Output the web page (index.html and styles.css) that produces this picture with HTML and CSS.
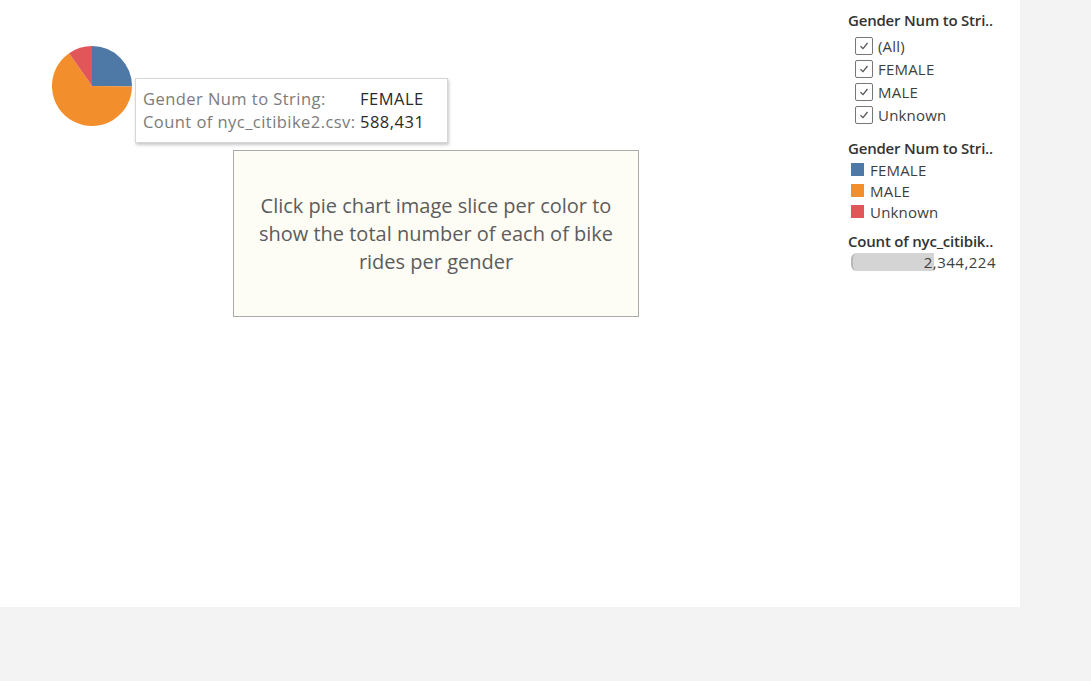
FILE: index.html
```html
<!DOCTYPE html>
<html>
<head>
<meta charset="utf-8">
<link rel="stylesheet" href="styles.css">
</head>
<body>
<div class="dash">
  <div class="canvas">
    <svg class="pie" width="82" height="82" viewBox="-41 -41 82 82">
      <path d="M0 0 L0 -40 A40 40 0 0 1 39.99 0.5 Z" fill="#4e79a7"/>
      <path d="M0 0 L39.99 0.5 A40 40 0 1 1 -22.9 -32.8 Z" fill="#f28e2b"/>
      <path d="M0 0 L-22.9 -32.8 A40 40 0 0 1 0 -40 Z" fill="#e15759"/>
    </svg>
    <div class="tooltip">
      <div class="tt-row"><span class="tt-k">Gender Num to String:</span><span class="tt-v">FEMALE</span></div>
      <div class="tt-row"><span class="tt-k">Count of nyc_citibike2.csv:</span><span class="tt-v">588,431</span></div>
    </div>
    <div class="note">Click pie chart image slice per color to show the total number of each of bike rides per gender</div>
  </div>
  <div class="side">
    <div class="ptitle">Gender Num to Stri..</div>
    <ul class="checks">
      <li><span class="cb"><svg width="12" height="12" viewBox="0 0 12 12"><path d="M2.5 6.2 L5 8.6 L9.5 3" fill="none" stroke="#555" stroke-width="1.3"/></svg></span>(All)</li>
      <li><span class="cb"><svg width="12" height="12" viewBox="0 0 12 12"><path d="M2.5 6.2 L5 8.6 L9.5 3" fill="none" stroke="#555" stroke-width="1.3"/></svg></span>FEMALE</li>
      <li><span class="cb"><svg width="12" height="12" viewBox="0 0 12 12"><path d="M2.5 6.2 L5 8.6 L9.5 3" fill="none" stroke="#555" stroke-width="1.3"/></svg></span>MALE</li>
      <li><span class="cb"><svg width="12" height="12" viewBox="0 0 12 12"><path d="M2.5 6.2 L5 8.6 L9.5 3" fill="none" stroke="#555" stroke-width="1.3"/></svg></span>Unknown</li>
    </ul>
    <div class="ptitle t2">Gender Num to Stri..</div>
    <ul class="legend">
      <li><span class="sw sw-f"></span>FEMALE</li>
      <li><span class="sw sw-m"></span>MALE</li>
      <li><span class="sw sw-u"></span>Unknown</li>
    </ul>
    <div class="ptitle t3">Count of nyc_citibik..</div>
    <div class="sizebar"><span class="bar"></span><span class="num">2,344,224</span></div>
  </div>
</div>
</body>
</html>
```

FILE: styles.css
```css
html, body { margin: 0; padding: 0; }
body {
  background: #f3f3f3;
  font-family: "Open Sans", "Noto Sans", sans-serif;
  width: 1091px;
  height: 681px;
  overflow: hidden;
}
.dash {
  width: 1020px;
  height: 607px;
  background: #fff;
  display: flex;
}
.canvas {
  position: relative;
  width: 840px;
  height: 607px;
}
.pie {
  position: absolute;
  left: 51px;
  top: 45px;
}
.tooltip {
  position: absolute;
  left: 135px;
  top: 78px;
  width: 313px;
  height: 65px;
  box-sizing: border-box;
  background: #fff;
  border: 1px solid #d6d6d6;
  box-shadow: 1px 2px 3px rgba(0,0,0,0.22);
  padding: 8px 0 0 7px;
  font-size: 16.5px;
  line-height: 23px;
}
.tt-row { display: flex; white-space: nowrap; }
.tt-k { color: #7b7b7b; width: 217px; letter-spacing: 0.45px; }
.tt-v { color: #2a2a2a; letter-spacing: 0.5px; }
.note {
  position: absolute;
  left: 233px;
  top: 150px;
  width: 406px;
  height: 167px;
  box-sizing: border-box;
  background: #fefdf5;
  border: 1px solid #ababab;
  display: flex;
  align-items: center;
  justify-content: center;
  text-align: center;
  padding: 0 20px;
  color: #5c5c5c;
  font-size: 20px;
  line-height: 28px;
}
.side {
  padding: 10px 0 0 8px;
  width: 172px;
  color: #444;
  font-size: 15px;
}
.ptitle {
  color: #333;
  font-size: 15px;
  line-height: 20px;
  font-weight: 600;
  letter-spacing: -0.2px;
  white-space: nowrap;
}
ul { list-style: none; margin: 0; padding: 0; }
.checks { padding-left: 7px; margin-top: 4px; }
.checks li {
  display: flex;
  align-items: center;
  height: 23px;
  color: #3e3e3e;
  letter-spacing: 0.2px;
}
.cb {
  width: 18px;
  height: 18px;
  box-sizing: border-box;
  border: 1px solid #777;
  border-radius: 2px;
  margin-right: 5px;
  display: flex;
  align-items: center;
  justify-content: center;
}
.t2 { margin-top: 12px; }
.legend { padding-left: 3px; margin-top: 1px; }
.legend li {
  display: flex;
  align-items: center;
  height: 21px;
  color: #3e3e3e;
  letter-spacing: 0.2px;
}
.sw { width: 13px; height: 13px; margin-right: 6px; }
.sw-f { background: #4e79a7; }
.sw-m { background: #f28e2b; }
.sw-u { background: #e15759; }
.t3 { margin-top: 9px; }
.sizebar {
  position: relative;
  margin: 2px 0 0 3px;
  width: 145px;
  height: 18px;
  display: flex;
  align-items: center;
  justify-content: flex-end;
}
.bar {
  position: absolute;
  left: 0;
  top: 0;
  width: 83px;
  height: 18px;
  background: #d4d4d4;
  border-left: 2px solid #b8b8b8;
  border-radius: 6px 0 0 6px;
  box-sizing: border-box;
}
.num { position: relative; color: #3e3e3e; letter-spacing: 0.5px; }
```
